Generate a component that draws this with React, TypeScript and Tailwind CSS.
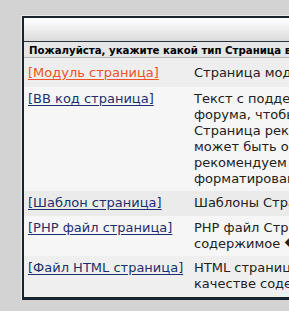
import React from "react";

const rowFont = { fontFamily: '"DejaVu Sans", Verdana, sans-serif' };

function Link({ children, active }: { children: React.ReactNode; active?: boolean }) {
  return (
    <a
      href="#"
      className={
        active
          ? "text-[#f0522a] underline underline-offset-2 whitespace-nowrap"
          : "text-[#1d2f6e] underline underline-offset-2 whitespace-nowrap"
      }
    >
      {children}
    </a>
  );
}

function Row({
  link,
  active,
  lines,
  bg,
  h,
}: {
  link: string;
  active?: boolean;
  lines: React.ReactNode[];
  bg: string;
  h?: string;
}) {
  return (
    <div className={`flex ${bg} ${h ?? ""}`}>
      <div className="w-[166px] shrink-0 pl-[4px] pt-[4px] pb-[4px]">
        <Link active={active}>{link}</Link>
      </div>
      <div className="flex-1 pl-[4px] pt-[4px] pb-[4px] text-[#222]">
        {lines.map((l, i) => (
          <div key={i} className="whitespace-nowrap">
            {l}
          </div>
        ))}
      </div>
    </div>
  );
}

export default function App() {
  return (
    <div className="w-[289px] h-[311px] overflow-hidden bg-[#d3d3d3] pt-[15px] pl-[21px]">
      <div className="w-[500px] border-t border-l border-[#e9e9e9]">
        <div className="border-2 border-b-[3px] border-[#19232c] bg-[#f4f4f4]">
          <div className="h-[24px] bg-gradient-to-b from-white to-[#dcdcdc] border-b border-[#2a333b]" />
          <div
            className="h-[16px] bg-[#e6e6e6] border-b border-[#b5b5b5] pl-[5px] text-[10.2px] leading-[17px] font-bold text-black whitespace-nowrap"
            style={rowFont}
          >
            Пожалуйста, укажите какой тип Страница вы хотите создать:
          </div>
          <div className="text-[13px] leading-[16px]" style={rowFont}>
            <Row
              bg="bg-[#eeeeee]"
              h="h-[29px] items-center"
              link="[Модуль страница]"
              active
              lines={["Страница модуля, созданная на основе модуля"]}
            />
            <Row
              bg="bg-[#f6f6f6]"
              link="[BB код страница]"
              lines={[
                "Текст с поддержкой BB кодов",
                "форума, чтобы создать страницу.",
                "Страница рекомендуется для тех, кто",
                "может быть ознакомлен с BB кодами,",
                <span key="r">
                  рекомендуем <span className="text-[#e8a15a]">использовать</span> BB
                </span>,
                "форматирование текста.",
              ]}
            />
            <Row
              bg="bg-[#ebebeb]"
              h="h-[25px]"
              link="[Шаблон страница]"
              lines={["Шаблоны Страница"]}
            />
            <Row
              bg="bg-[#f6f6f6]"
              link="[PHP файл страница]"
              lines={["PHP файл Страница использует", "содержимое \uFFFD файла"]}
            />
            <Row
              bg="bg-[#efefef]"
              h="h-[41px]"
              link="[Файл HTML страница]"
              lines={["HTML страница использует в", "качестве содержимого файл"]}
            />
          </div>
        </div>
      </div>
    </div>
  );
}
